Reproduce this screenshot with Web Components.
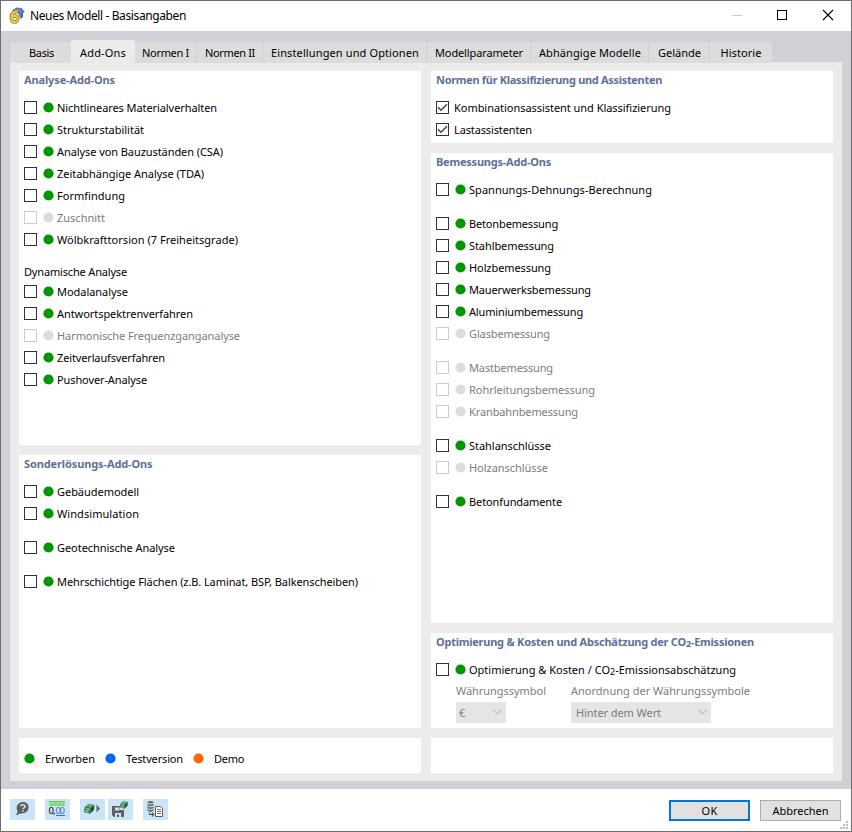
<!DOCTYPE html>
<html lang="de">
<head>
<meta charset="utf-8">
<title>Neues Modell - Basisangaben</title>
<style>
html,body{margin:0;padding:0;background:#fff}
body{font:11px/16px "Noto Sans","Open Sans",sans-serif;color:#000;width:852px;height:832px;overflow:hidden}
</style>
</head>
<body>
<model-dialog></model-dialog>
<script>
const define=(name,css,html,setup)=>customElements.define(name,class extends HTMLElement{
  constructor(){super();this.attachShadow({mode:'open'});}
  connectedCallback(){
    const a=k=>this.getAttribute(k);
    this.shadowRoot.innerHTML='<style>*{box-sizing:border-box}'+css+'</style>'+(typeof html==='function'?html(a,this):html);
    if(setup)setup(this);
  }
});

/* Single line of text, tracked to span the width given in w. */
define('fit-text',':host{display:block;white-space:nowrap;flex:none}span{display:inline-block;white-space:nowrap}','<span><slot></slot></span>',el=>{
  const w=+el.getAttribute('w');if(!w)return;
  const s=el.shadowRoot.querySelector('span');
  s.style.letterSpacing=((w-s.getBoundingClientRect().width)/el.textContent.length)+'px';
  el.style.width=w+'px';
});

define('tab-item',`:host{display:flex;justify-content:center;height:21px;margin-top:2px;background:#dcdcdc;border-right:1px solid #d0d0d2;padding:3px 0 0 1px;box-sizing:border-box;flex:none}
:host([active]){height:23px;margin-top:0;background:#ebebeb;border:0;padding:5px 0 0}:host([last]){border:0;padding-left:0}:host([plain]){border:0;padding-left:2px}`,'<slot></slot>');

define('status-dot',':host{display:block;width:11px;height:11px;flex:none}svg{display:block}',a=>`<svg width="11" height="11"><circle cx="5.5" cy="5.5" r="5.1" fill="${a('color')||'#009600'}"/></svg>`);

define('check-row',`:host{display:flex;height:22px;align-items:flex-start}
.box{width:13px;height:13px;border:1px solid #333;margin-top:4px;flex:none;background:#fff}
svg{display:block}status-dot{margin:5px 0 0 6px}fit-text{margin:3px 0 0 3px}
:host([checked]) fit-text{margin-left:5px}
:host([off]){color:#7c7c7c}:host([off]) .box{border-color:#ccc}`,
(a,el)=>`<div class="box">${a('checked')!==null?'<svg width="11" height="11"><path d="M1 5.2 4 8.2 10 2.2" fill="none" stroke="#444" stroke-width="1.5"/></svg>':''}</div>${a('checked')!==null?'':`<status-dot color="${a('off')!==null?'#dcdce0':'#009600'}"></status-dot>`}<fit-text w="${a('w')}">${el.innerHTML}</fit-text>`);

define('group-panel',`:host{display:block;background:#fff;padding:0 5px;box-sizing:border-box}
.h{height:26px;padding-top:1px;color:#5f7096;font-weight:700;font-family:"Noto Sans","Open Sans",sans-serif}`,a=>a('heading')?`<div class="h"><fit-text w="${a('w')}">${a('heading')}</fit-text></div><slot></slot>`:'<slot></slot>');

define('combo-box',`:host{display:block;color:#7c7c7c}.f{display:flex;justify-content:space-between;align-items:flex-start;height:21px;margin-top:3px;background:#e5e5e5;padding:3px 4px 0 3px}.i{padding-left:var(--in,0)}svg{margin-top:3px}`,
a=>`<fit-text w="${a('lw')}">${a('label')}</fit-text><div class="f" style="width:${a('bw')}px"><fit-text class="i" w="${a('vw')}">${a('value')}</fit-text><svg width="9" height="9"><path d="M.5 2 4.5 6 8.5 2" fill="none" stroke="#aaa"/></svg></div>`);

define('tool-button',':host{display:block;width:25px;height:21px;background:#cce4f7;flex:none}::slotted(svg){display:block}','<slot></slot>');

define('push-button',`:host{display:flex;justify-content:center;width:81px;height:21px;border:1px solid #adadad;background:#e1e1e1;box-sizing:border-box;padding-top:2px}
:host([default]){border:2px solid #0078d7;padding-top:1px}`,'<slot></slot>');

const row=(t,w,x='')=>`<check-row w="${w}" ${x}>${t}</check-row>`;
const gap='<div class="gap"></div>';
const two="<span style='font-size:9px;line-height:0;vertical-align:-1px'>2</span>";
const cube=`<path d="M2 4.5 5.5 1.5 12 2.5 8.5 5.5Z" fill="#5fa878"/><path d="M2 4.5 8.5 5.5 7.5 12 1 10.5Z" fill="#2c7a4c"/><path d="M8.5 5.5 12 2.5 11.5 8 7.5 12Z" fill="#14532c"/><path d="M3 6.6 6.5 7 6.2 8.3 3 8.8 2.8 10 6 10.4" fill="none" stroke="#b5d4be" stroke-width=".9"/>`;

define('model-dialog',`
:host{display:flex;flex-direction:column;width:852px;height:832px;box-sizing:border-box;border:1px solid #6e6e70;background:#fff}
.title{height:30px;display:flex;align-items:flex-start;flex:none;padding-left:7px}
.title>svg{margin-top:6px}.title fit-text{font-size:12px;margin:7px 0 0 5px}
.ctl{margin:0 0 0 auto!important}
.body{background:#d1d0d6;height:758px;padding:9px 9px 0;flex:none}
.tabs{display:flex;height:23px;position:relative}
.page{background:#ebebeb;height:719px;margin-top:-1px;padding:9px 9px 0;display:flex;gap:10px}
.col{display:flex;flex-direction:column;gap:10px;width:402px}
.gap{height:12px}.sub{height:30px;padding-top:13px}
.legend{display:flex;padding-top:13px}.legend status-dot{margin-top:2px}
.legend fit-text{margin:0 10px}
.combos{display:flex;padding:2px 0 0 20px}.combos combo-box{width:115px}
.foot{display:flex;flex:1;padding:10px 10px 0 9px;position:relative}
.push{display:flex;gap:10px;margin:1px 0 0 auto}
.grip{position:absolute;right:3px;bottom:2px}
`,`
<div class="title">
<svg width="17" height="18" viewBox="0 0 17 18"><path d="M4 3.5 8.5 .6 14 1.3 16.6 5 15 6.2V10L12.5 12 10 6Z" fill="#3f67a0"/><path d="M6 2.8 14 1.8M9 4.2 15.5 3.6M11 6.2 16 5.2M12.5 6.5v5M9 .8 13 5" stroke="#8eaad0" stroke-width=".7" fill="none"/><g fill="none" stroke="#756b48" stroke-width="3.5"><path d="M9.8 4.4H9C5 4.6 3.2 7.5 3.2 11.6"/><circle cx="6.6" cy="12" r="3.1"/></g><g fill="none" stroke="#f7cc30" stroke-width="2.1"><path d="M9.8 4.4H9C5 4.6 3.4 7.5 3.4 11.6"/><circle cx="6.6" cy="12" r="3.1"/></g></svg>
<fit-text w="156">Neues Modell - Basisangaben</fit-text>
<svg class="ctl" width="120" height="30" shape-rendering="crispEdges"><path d="M1 14.5h10" stroke="#c8c8c8"/><rect x="46.5" y="9.5" width="9" height="9" fill="none" stroke="#000"/><path d="M92 9l10 10M102 9 92 19" stroke="#000" shape-rendering="auto" stroke-width="1.1"/></svg>
</div>
<div class="body">
<div class="tabs">
<tab-item plain style="width:61px"><fit-text w="25">Basis</fit-text></tab-item><tab-item active style="width:64px"><fit-text w="46">Add-Ons</fit-text></tab-item><tab-item style="width:62px;padding-left:0"><fit-text w="47">Normen I</fit-text></tab-item><tab-item style="width:66px"><fit-text w="50">Normen II</fit-text></tab-item><tab-item style="width:164px"><fit-text w="148">Einstellungen und Optionen</fit-text></tab-item><tab-item style="width:104px"><fit-text w="88">Modellparameter</fit-text></tab-item><tab-item style="width:118px"><fit-text w="102">Abhängige Modelle</fit-text></tab-item><tab-item style="width:61px"><fit-text w="43">Gelände</fit-text></tab-item><tab-item last style="width:62px"><fit-text w="41">Historie</fit-text></tab-item>
</div>
<div class="page">
<div class="col">
<group-panel heading="Analyse-Add-Ons" w="91" style="height:374px">
${row('Nichtlineares Materialverhalten',160)}${row('Strukturstabilität',87)}${row('Analyse von Bauzuständen (CSA)',166)}${row('Zeitabhängige Analyse (TDA)',147)}${row('Formfindung',68)}${row('Zuschnitt',48,'off')}${row('Wölbkrafttorsion (7 Freiheitsgrade)',181)}
<div class="sub"><fit-text w="103">Dynamische Analyse</fit-text></div>
${row('Modalanalyse',71)}${row('Antwortspektrenverfahren',136)}${row('Harmonische Frequenzganganalyse',183,'off')}${row('Zeitverlaufsverfahren',108)}${row('Pushover-Analyse',90)}
</group-panel>
<group-panel heading="Sonderlösungs-Add-Ons" w="128.5" style="height:273px">
${row('Gebäudemodell',82)}${row('Windsimulation',82)}${gap}${row('Geotechnische Analyse',118)}${gap}${row('Mehrschichtige Flächen (z.B. Laminat, BSP, Balkenscheiben)',301)}
</group-panel>
<group-panel style="height:35px"><div class="legend"><status-dot></status-dot><fit-text w="50">Erworben</fit-text><status-dot color="#0064ff"></status-dot><fit-text w="57">Testversion</fit-text><status-dot color="#ff6600"></status-dot><fit-text w="30">Demo</fit-text></div></group-panel>
</div>
<div class="col">
<group-panel heading="Normen für Klassifizierung und Assistenten" w="226" style="height:72px">
${row('Kombinationsassistent und Klassifizierung',217,'checked')}${row('Lastassistenten',78,'checked')}
</group-panel>
<group-panel heading="Bemessungs-Add-Ons" w="115" style="height:470px">
${row('Spannungs-Dehnungs-Berechnung',183)}${gap}${row('Betonbemessung',89)}${row('Stahlbemessung',85)}${row('Holzbemessung',82)}${row('Mauerwerksbemessung',122)}${row('Aluminiumbemessung',114)}${row('Glasbemessung',81,'off')}${gap}${row('Mastbemessung',84,'off')}${row('Rohrleitungsbemessung',126,'off')}${row('Kranbahnbemessung',109,'off')}${gap}${row('Stahlanschlüsse',82)}${row('Holzanschlüsse',79,'off')}${gap}${row('Betonfundamente',93)}
</group-panel>
<group-panel heading="Optimierung &amp;amp; Kosten und Abschätzung der CO${two}-Emissionen" w="318" style="height:95px">
${row('Optimierung &amp; Kosten / CO'+two+'-Emissionsabschätzung',267)}
<div class="combos"><combo-box label="Währungssymbol" lw="90" bw="50" value="€" vw="6"></combo-box><combo-box label="Anordnung der Währungssymbole" lw="179" bw="140" value="Hinter dem Wert" vw="85" style="--in:2px"></combo-box></div>
</group-panel>
<group-panel style="height:35px"></group-panel>
</div>
</div>
</div>
<div class="foot">
<tool-button><svg width="25" height="21"><path d="M6 16.5 7.6 12.5C5 7 8.5 3 13 3 20.5 3 20.5 13.5 13 14.2 10.5 14.2 9 15 6 16.5Z" fill="#5f5f5f"/><path d="M10.7 7.3C10.7 5 15 5.3 15 7.4 15 9 12.9 8.8 12.9 10.3M12.9 11.2v1.5" fill="none" stroke="#cce4f7" stroke-width="1.5"/></svg></tool-button>
<tool-button style="margin-left:10px"><svg width="25" height="21"><rect x="4" y="2" width="16" height="5" fill="#98dc87"/><path d="M6.5 5v2M9.5 5v2M12.5 5v2M15.5 5v2M18.5 5v2M4 2.5h16" stroke="#6bbd60" stroke-width=".8"/><text x="3.5" y="15" font-family="Noto Sans" font-size="9.5" textLength="7" fill="#000">0,</text><text x="10.5" y="15" font-family="Noto Sans" font-size="9.5" textLength="9.5" fill="#326ddc">00</text><path d="M11 16.5h9" stroke="#326ddc"/></svg></tool-button>
<tool-button style="margin-left:10px"><svg width="25" height="21"><g transform="translate(3 3.3) scale(.95)">${cube}</g><path d="M16.5 5.5 20 9.5 16.5 13.5Z" fill="#666"/></svg></tool-button>
<tool-button style="margin-left:3px"><svg width="25" height="21"><path d="M4 7H12V11H16V18H6L4 16Z" fill="#5f5f5f"/><path d="M7 8.5H11.5V11.5H7ZM7 14H13V18H11V15.5H9V18H7Z" fill="#cce4f7"/><g transform="translate(11.2 1) scale(.72)">${cube}</g></svg></tool-button>
<tool-button style="margin-left:10px"><svg width="25" height="21"><path d="M4.5 3V11.5Q7.5 14 10.5 11.5V3Q7.5 1 4.5 3Z" fill="#666"/><path d="M4.5 4.3Q7.5 6 10.5 4.3M4.5 7Q7.5 8.7 10.5 7M4.5 9.7Q7.5 11.4 10.5 9.7" fill="none" stroke="#e1eff9"/><path d="M6.5 13.5V15.5H10.5M8.8 13.5 10.8 15.5 8.8 17.5" fill="none" stroke="#5f5f5f" stroke-width="1.2"/><path d="M12.5 7.5H17.5L19.5 9.5V17.5H12.5Z" fill="#fff" stroke="#5f5f5f"/><path d="M14 10.5h4M14 12.5h4M14 14.5h4" stroke="#5f5f5f" stroke-width=".9"/></svg></tool-button>
<div class="push"><push-button default><fit-text w="16">OK</fit-text></push-button><push-button><fit-text w="56">Abbrechen</fit-text></push-button></div>
<svg class="grip" width="8" height="8" fill="#c0c0c0"><path d="M6 0h2v2H6zM3 3h2v2H3zM6 3h2v2H6zM0 6h2v2H0zM3 6h2v2H3zM6 6h2v2H6z"/></svg>
</div>`);
</script>
</body>
</html>
